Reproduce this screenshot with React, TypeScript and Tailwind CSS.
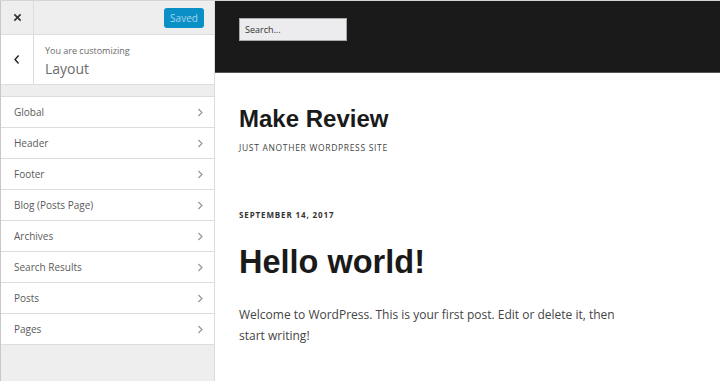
import React from 'react';

const sections = [
  'Global',
  'Header',
  'Footer',
  'Blog (Posts Page)',
  'Archives',
  'Search Results',
  'Posts',
  'Pages',
];

const openSans = "font-['Open_Sans',_'Liberation_Sans',_sans-serif]";

function Chevron({ className = '' }: { className?: string }) {
  return (
    <svg viewBox="0 0 10 14" className={className} fill="none">
      <path d="M3 2.5 L7.5 7 L3 11.5" stroke="currentColor" strokeWidth="1.6" />
    </svg>
  );
}

function Sidebar() {
  return (
    <aside className={`w-[215px] shrink-0 flex flex-col bg-[#eeeeee] border-l border-[#c8c8c8] border-r border-r-[#dddddd] ${openSans}`}>
      {/* Top bar */}
      <div className="h-[34px] flex items-stretch border-b border-[#dddddd]">
        <div className="w-[33px] flex items-center justify-center border-r border-[#dddddd] text-[#333]">
          <svg viewBox="0 0 10 10" className="w-[9px] h-[9px]">
            <path d="M1.5 1.5 L8.5 8.5 M8.5 1.5 L1.5 8.5" stroke="currentColor" strokeWidth="1.8" />
          </svg>
        </div>
        <div className="flex-1 flex items-center justify-end pr-[10px]">
          <button className="h-[20px] w-[40px] rounded-[3px] bg-[#0b8fc7] text-[#a6d5ec] text-[10px] leading-none">
            Saved
          </button>
        </div>
      </div>

      {/* Customizing info */}
      <div className="h-[50px] bg-white flex items-stretch border-b border-[#dddddd]">
        <div className="w-[33px] flex items-center justify-center border-r border-[#dddddd] text-[#222]">
          <svg viewBox="0 0 10 14" className="w-[8px] h-[11px]">
            <path d="M7 2 L2.5 7 L7 12" stroke="currentColor" strokeWidth="1.8" fill="none" />
          </svg>
        </div>
        <div className="flex-1 pl-[11px] pt-[10px]">
          <div className="text-[9px] leading-[12px] text-[#6a6a6a]">You are customizing</div>
          <div className="text-[14px] leading-[20px] text-[#6b6b6b] mt-[2px]">Layout</div>
        </div>
      </div>

      <div className="h-[11px]" />

      {/* Sections */}
      <ul className="bg-white border-t border-[#dddddd]">
        {sections.map(label => (
          <li
            key={label}
            className="h-[31px] flex items-center justify-between pl-[13px] pr-[10px] border-b border-[#dddddd] text-[10px] text-[#5a5a5a]"
          >
            <span>{label}</span>
            <Chevron className="w-[8px] h-[11px] text-[#999]" />
          </li>
        ))}
      </ul>

      <div className="flex-1" />
    </aside>
  );
}

function Preview() {
  return (
    <main className="flex-1 flex flex-col bg-white">
      <header className="h-[72px] bg-[#1a1a1a] border-b border-[#555] pl-[24px] pt-[17px]">
        <div className={`w-[108px] h-[23px] bg-[#ececee] border border-[#aaa] px-[5px] flex items-center text-[9px] text-[#333] ${openSans}`}>
          Search...
        </div>
      </header>

      <div className="pl-[24px]">
        <h1 className="mt-[32px] text-[24px] leading-[28px] font-bold text-[#1a1a1a] font-['Liberation_Sans',_Arial,_sans-serif]">
          Make Review
        </h1>
        <p className={`mt-[9px] text-[8.5px] leading-[12px] tracking-[0.08em] text-[#444] ${openSans}`}>
          JUST ANOTHER WORDPRESS SITE
        </p>

        <div className={`mt-[55px] text-[8px] leading-[12px] font-bold tracking-[0.11em] text-[#333] ${openSans}`}>
          SEPTEMBER 14, 2017
        </div>
        <h2 className="mt-[22px] text-[32.5px] leading-[38px] font-bold text-[#1a1a1a] font-['Liberation_Sans',_Arial,_sans-serif]">
          Hello world!
        </h2>
        <p className={`mt-[23px] w-[400px] text-[12px] leading-[21px] text-[#444] ${openSans}`}>
          Welcome to WordPress. This is your first post. Edit or delete it, then start writing!
        </p>
      </div>
    </main>
  );
}

export default function App() {
  return (
    <div className="w-[720px] h-[381px] overflow-hidden flex flex-col bg-white">
      <div className="h-px bg-[#d5d5d5]" />
      <div className="flex-1 flex min-h-0">
        <Sidebar />
        <Preview />
      </div>
    </div>
  );
}
